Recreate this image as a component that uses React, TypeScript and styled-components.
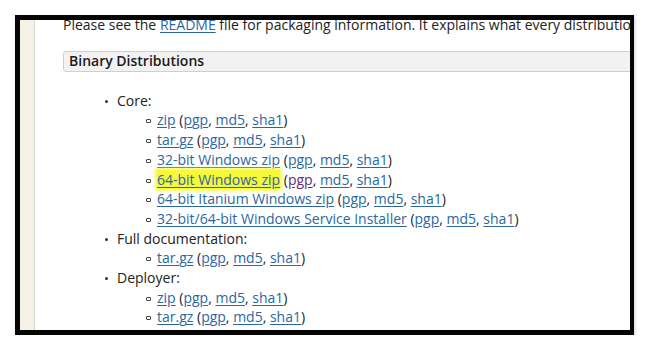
import styled, { createGlobalStyle } from "styled-components";

const GlobalStyle = createGlobalStyle`
  body {
    margin: 0;
    background: #fff;
    font-family: "Open Sans", "Liberation Sans", sans-serif;
    font-size: 14px;
    color: #222;
  }
`;

const Stage = styled.div`
  padding: 15px 0 0 15px;
`;

const Frame = styled.div`
  width: 619px;
  height: 320px;
  box-sizing: border-box;
  border: 5px solid #050505;
  border-right-width: 4px;
  display: flex;
  overflow: hidden;
  background: #fff;
  box-shadow: 1px 2px 3px rgba(0, 0, 0, 0.18);
`;

const Gutter = styled.div`
  width: 14px;
  flex: none;
  background: #f6f1e5;
  border-right: 1px solid #d9d6cd;
`;

const Content = styled.div`
  flex: 1;
  min-width: 0;
  overflow: hidden;
  padding-left: 28px;
`;

const Page = styled.div`
  width: 720px;
  line-height: 19.7px;
  margin-top: -5px;
`;

const Intro = styled.p`
  margin: 0;
  white-space: nowrap;
`;

const SectionHead = styled.h3`
  margin: 16px 0 0;
  height: 19px;
  padding: 0 5px;
  border: 1px solid #cfcfcf;
  border-radius: 3px;
  background: #f2f2f2;
  font-size: 14px;
  font-weight: 600;
  line-height: 18px;
  color: #1a1a1a;
`;

const List = styled.ul<{ $nested?: boolean }>`
  list-style: none;
  margin: ${(p) => (p.$nested ? "0" : "19px 0 0")};
  padding-left: ${(p) => (p.$nested ? "40px" : "54px")};
`;

const Item = styled.li<{ $nested?: boolean }>`
  position: relative;
  white-space: nowrap;

  &::before {
    content: "";
    position: absolute;
    top: 9px;
    left: ${(p) => (p.$nested ? "-11px" : "-12px")};
    width: 3px;
    height: ${(p) => (p.$nested ? "2px" : "3px")};
    border-radius: ${(p) => (p.$nested ? "1px" : "50%")};
    background: ${(p) => (p.$nested ? "#fff" : "#333")};
    border: ${(p) => (p.$nested ? "1px solid #444" : "none")};
  }
`;

const Link = styled.a<{ $visited?: boolean; $marked?: boolean }>`
  color: ${(p) => (p.$visited ? "#6a2a7c" : "#2a67a0")};
  text-decoration: underline;
  text-underline-offset: 2px;
  background: ${(p) => (p.$marked ? "#f6f83a" : "transparent")};
  box-shadow: ${(p) => (p.$marked ? "0 0 3px 2px rgba(246, 248, 58, 0.85)" : "none")};
`;

type Dl = { label: string; marked?: boolean; visitedPgp?: boolean };

const groups: { title: string; items: Dl[] }[] = [
  {
    title: "Core:",
    items: [
      { label: "zip" },
      { label: "tar.gz" },
      { label: "32-bit Windows zip" },
      { label: "64-bit Windows zip", marked: true, visitedPgp: true },
      { label: "64-bit Itanium Windows zip" },
      { label: "32-bit/64-bit Windows Service Installer" },
    ],
  },
  { title: "Full documentation:", items: [{ label: "tar.gz" }] },
  { title: "Deployer:", items: [{ label: "zip" }, { label: "tar.gz" }] },
];

export default function App() {
  return (
    <>
      <GlobalStyle />
      <Stage>
        <Frame>
          <Gutter />
          <Content>
            <Page>
              <Intro>
                Please see the <Link href="#">README</Link> file for packaging information. It
                explains what every distribution contains.
              </Intro>
              <SectionHead>Binary Distributions</SectionHead>
              <List>
                {groups.map((g) => (
                  <Item key={g.title}>
                    {g.title}
                    <List $nested>
                      {g.items.map((d) => (
                        <Item $nested key={d.label}>
                          <Link href="#" $marked={d.marked}>
                            {d.label}
                          </Link>{" "}
                          (<Link href="#" $visited={d.visitedPgp}>pgp</Link>,{" "}
                          <Link href="#">md5</Link>, <Link href="#">sha1</Link>)
                        </Item>
                      ))}
                    </List>
                  </Item>
                ))}
              </List>
            </Page>
          </Content>
        </Frame>
      </Stage>
    </>
  );
}
